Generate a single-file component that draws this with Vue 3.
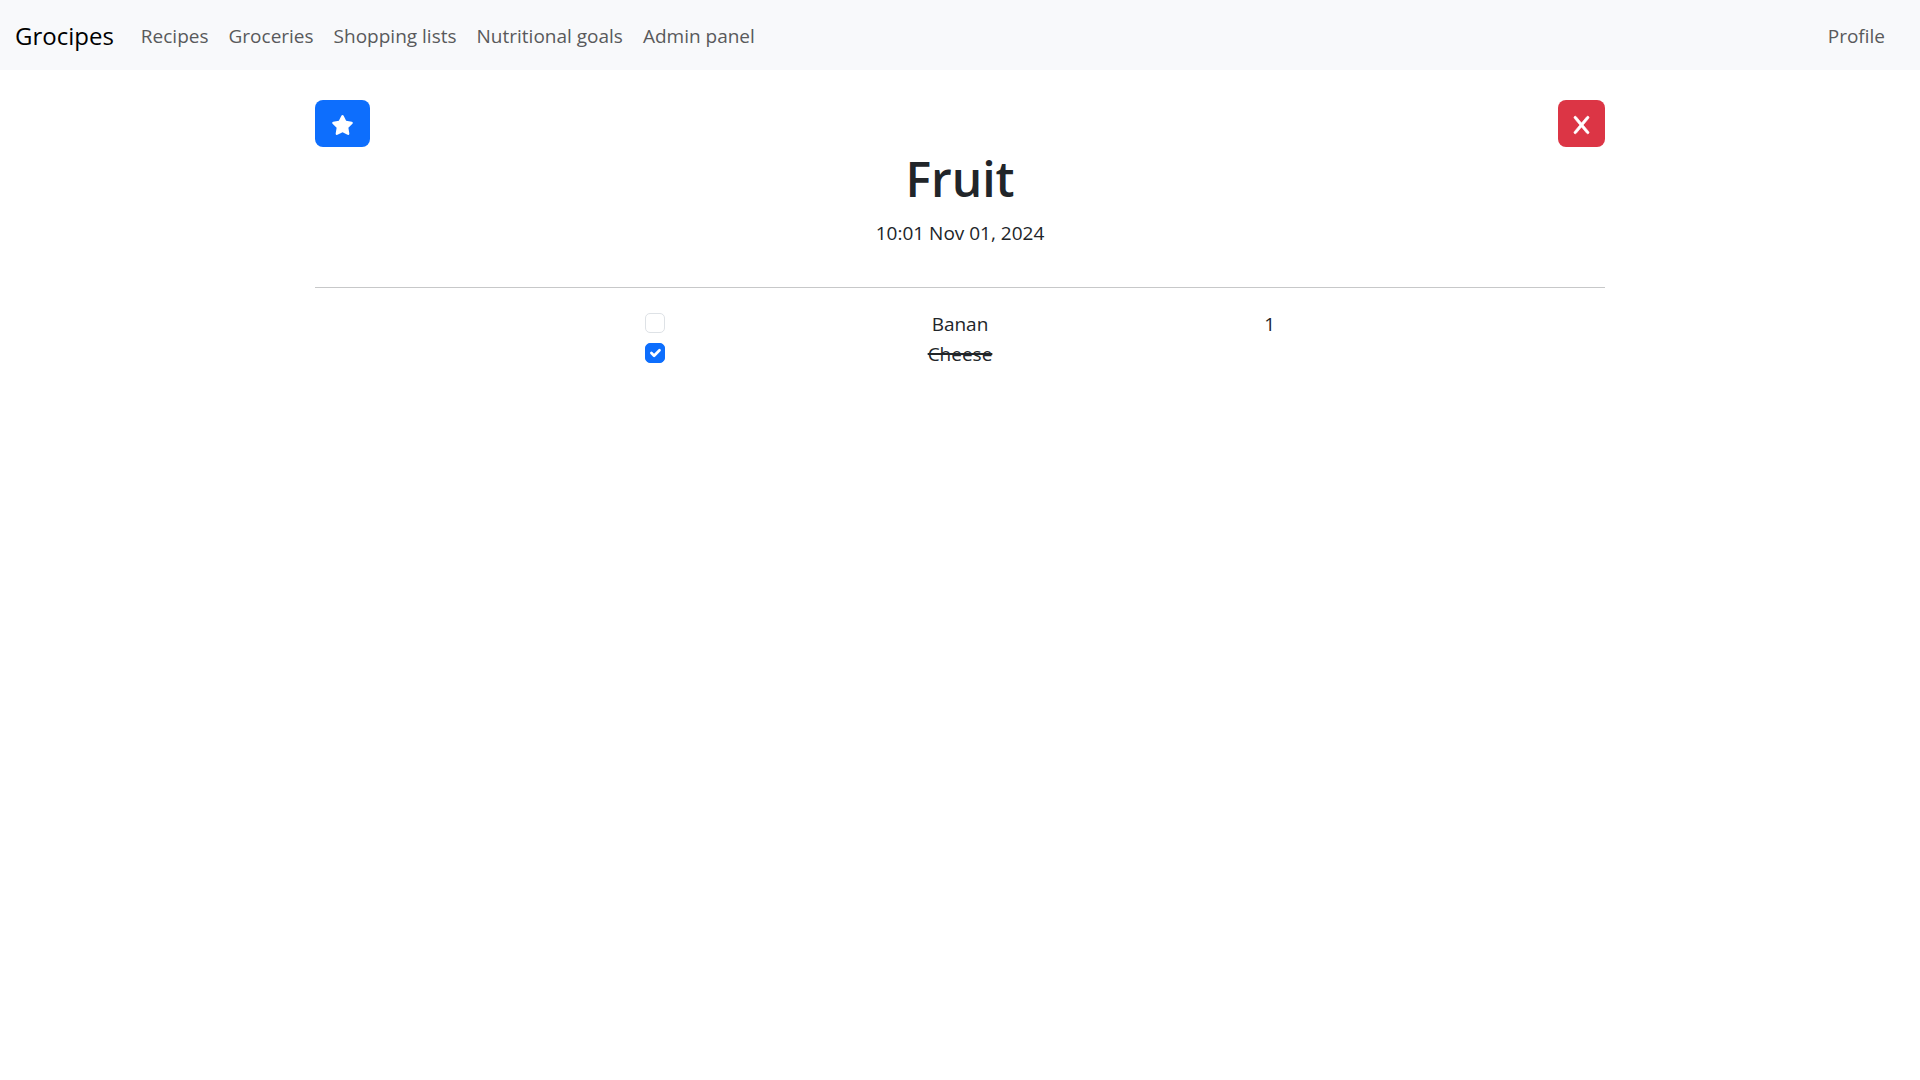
<script setup>
import { ref } from 'vue'

const links = ['Recipes', 'Groceries', 'Shopping lists', 'Nutritional goals', 'Admin panel']

const items = ref([
  { id: 1, name: 'Banan', amount: '1', done: false },
  { id: 2, name: 'Cheese', amount: '', done: true },
])
</script>

<template>
  <nav class="navbar">
    <a class="brand" href="#">Grocipes</a>
    <ul class="links">
      <li v-for="link in links" :key="link"><a href="#">{{ link }}</a></li>
    </ul>
    <a class="profile" href="#">Profile</a>
  </nav>

  <main class="container">
    <div class="actions">
      <button class="btn favourite" type="button" aria-label="Favourite">
        <svg width="23" height="20" viewBox="0 0 576 512" fill="currentColor" aria-hidden="true">
          <path d="M316.900 18C311.600 7 300.400 0 288.100 0s-23.400 7-28.800 18L195 150.300 51.400 171.500c-12 1.800-22 10.200-25.700 21.700s-.7 24.200 7.900 32.700L137.800 329 113.200 474.700c-2 12 3 24.200 12.900 31.300s23 8 33.800 2.300l128.300-68.500 128.300 68.500c10.800 5.700 23.900 4.900 33.800-2.300s14.900-19.300 12.900-31.300L438.500 329 542.700 225.900c8.600-8.500 11.700-21.200 7.900-32.700s-13.700-19.900-25.700-21.700L381.200 150.300 316.900 18z" />
        </svg>
      </button>
      <button class="btn delete" type="button" aria-label="Delete">
        <svg width="15" height="20" viewBox="0 0 384 512" fill="currentColor" stroke="currentColor" stroke-width="18" aria-hidden="true">
          <path d="M376.600 84.500c11.300-13.600 9.500-33.800-4.100-45.100s-33.800-9.500-45.100 4.100L192 206 56.600 43.500C45.300 29.900 25.100 28.100 11.500 39.400S-3.900 70.900 7.400 84.500L150.300 256 7.400 427.500c-11.300 13.600-9.500 33.800 4.100 45.100s33.800 9.500 45.100-4.100L192 306 327.400 468.500c11.300 13.600 31.500 15.400 45.100 4.100s15.400-31.500 4.100-45.100L233.700 256 376.600 84.500z" />
        </svg>
      </button>
    </div>

    <h1>Fruit</h1>
    <p class="date">10:01 Nov 01, 2024</p>
    <hr />

    <ul class="items">
      <li v-for="item in items" :key="item.id" class="item" :class="{ done: item.done }">
        <input :id="`item-${item.id}`" v-model="item.done" type="checkbox" />
        <label :for="`item-${item.id}`">{{ item.name }}</label>
        <span>{{ item.amount }}</span>
      </li>
    </ul>
  </main>
</template>

<style>
body {
  margin: 0;
  background: #fff;
  color: #212529;
  font-family: "Segoe UI", "Open Sans", "Noto Sans", sans-serif;
  font-size: 19px;
  line-height: 30px;
}
</style>

<style scoped>
.navbar {
  display: flex;
  align-items: center;
  height: 70px;
  padding: 2px 35px 0 15px;
  box-sizing: border-box;
  background: #f8f9fb;
}

.navbar a {
  color: #595a5b;
  text-decoration: none;
}

.navbar .brand {
  margin-right: 27px;
  color: #000;
  font-size: 24px;
}

.links {
  display: flex;
  gap: 20px;
  margin: 0;
  padding: 0;
  list-style: none;
}

.profile {
  margin-left: auto;
}

.container {
  max-width: 1290px;
  margin: 0 auto;
  padding: 30px 15px;
  text-align: center;
}

.actions {
  display: flex;
  justify-content: space-between;
}

.btn {
  display: flex;
  align-items: center;
  justify-content: center;
  height: 47px;
  padding: 2px 16px 0;
  border: 0;
  border-radius: 8px;
  color: #fff;
  cursor: pointer;
}

.btn svg {
  overflow: visible;
}

.favourite {
  background: #0d6efd;
}

.delete {
  background: #dc3545;
}

h1 {
  margin: 2px 0 9px;
  font-size: 48px;
  font-weight: 600;
  line-height: 60px;
}

.date {
  margin: 0;
}

hr {
  margin: 39px 0 20px;
  border: 0;
  border-top: 1px solid #c7c8c9;
}

.items {
  margin: 0;
  padding: 0;
  list-style: none;
}

.item {
  display: grid;
  grid-template-columns: repeat(3, 24%);
  justify-content: center;
  justify-items: center;
  height: 30px;
  line-height: 32px;
}

.item input {
  appearance: none;
  width: 20px;
  height: 20px;
  margin: 5px 0 0 10px;
  border: 1px solid #dee2e6;
  border-radius: 5px;
  background: #fff;
}

.item input:checked {
  border-color: #0d6efd;
  background: #0d6efd url("data:image/svg+xml,%3Csvg xmlns='http://www.w3.org/2000/svg' viewBox='0 0 20 20'%3E%3Cpath fill='none' stroke='%23fff' stroke-linecap='round' stroke-linejoin='round' stroke-width='3' d='m6 10 3 3 6-6'/%3E%3C/svg%3E") center / contain no-repeat;
}

.done label {
  text-decoration: line-through;
  text-decoration-thickness: 2px;
}
</style>
